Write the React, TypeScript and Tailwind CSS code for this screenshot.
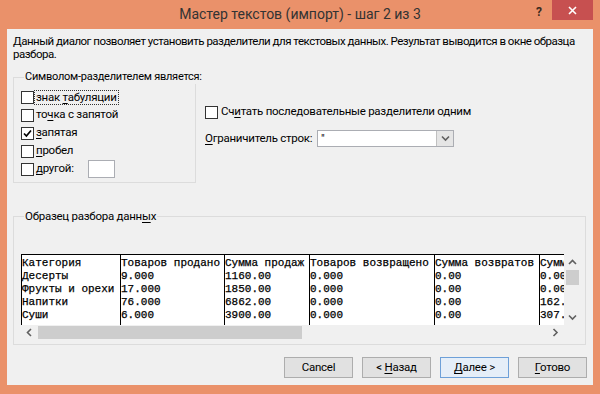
import React from 'react'

const ui = "font-['Roboto',sans-serif]"
const mono = "font-['Liberation_Mono',monospace]"

function M({ children }: { children: React.ReactNode }) {
  return <span className="underline underline-offset-2">{children}</span>
}

function Box({ checked }: { checked?: boolean }) {
  return (
    <span className="w-[13px] h-[13px] border border-[#333] bg-white shrink-0 flex items-center justify-center">
      {checked && (
        <svg width="11" height="11" viewBox="0 0 11 11">
          <path d="M2 5.5 L4.4 8 L9 2.5" fill="none" stroke="#000" strokeWidth="1.7" />
        </svg>
      )}
    </span>
  )
}

function Chevron({ dir }: { dir: 'up' | 'down' | 'left' | 'right' }) {
  const d = {
    up: 'M1 5 L4.5 1.5 L8 5',
    down: 'M1 1.5 L4.5 5 L8 1.5',
    left: 'M5 1 L1.5 4.5 L5 8',
    right: 'M1.5 1 L5 4.5 L1.5 8',
  }[dir]
  const vert = dir === 'up' || dir === 'down'
  return (
    <svg width={vert ? 9 : 7} height={vert ? 7 : 9} viewBox={vert ? '0 0 9 7' : '0 0 7 9'}>
      <path d={d} fill="none" stroke="#606060" strokeWidth="1.6" />
    </svg>
  )
}

const delimiters = [
  { pre: 'знак ', m: 'т', post: 'абуляции', focus: true },
  { pre: 'то', m: 'ч', post: 'ка с запятой' },
  { pre: '', m: 'з', post: 'апятая', checked: true },
  { pre: '', m: 'п', post: 'робел' },
  { pre: '', m: 'д', post: 'ругой:', input: true },
]

const columns = [
  { w: 'w-[99px]', cells: ['Категория', 'Десерты', 'Фрукты и орехи', 'Напитки', 'Суши'] },
  { w: 'w-[104px]', cells: ['Товаров продано', '9.000', '17.000', '76.000', '6.000'] },
  { w: 'w-[85px]', cells: ['Сумма продаж', '1160.00', '1850.00', '6862.00', '3900.00'] },
  { w: 'w-[125px]', cells: ['Товаров возвращено', '0.000', '0.000', '0.000', '0.000'] },
  { w: 'w-[105px]', cells: ['Сумма возвратов', '0.00', '0.00', '0.00', '0.00'] },
  { w: 'w-[25px]', cells: ['Сумм', '0.00', '0.00', '162.', '307.'] },
]

const buttons = [
  { label: <>Cancel</> },
  { label: <>&lt; <M>Н</M>азад</> },
  { label: <><M>Д</M>алее &gt;</>, primary: true },
  { label: <><M>Г</M>отово</> },
]

export default function App() {
  return (
    <div className={`w-[600px] h-[394px] bg-[#ea916a] flex flex-col text-black ${ui}`}>
      {/* title bar */}
      <div className="h-[29px] relative shrink-0">
        <div className="text-center text-[14px] leading-[29px] text-[#333]">
          Мастер текстов (импорт) - шаг 2 из 3
        </div>
        <div className="absolute left-[536px] top-[3px] text-[12px] font-bold text-[#3a2a20]">?</div>
        <div className="absolute left-[552px] top-0 w-[41px] h-[20px] bg-[#c75050] flex items-center justify-center">
          <svg width="9" height="9" viewBox="0 0 9 9">
            <path d="M1 1 L8 8 M8 1 L1 8" stroke="#fff" strokeWidth="1.6" />
          </svg>
        </div>
      </div>

      {/* client area */}
      <div className="mx-[7px] flex-1 bg-[#f0f0f0] px-[6px] pt-[6px] pb-[7px] flex flex-col text-[11.5px] tracking-[-0.25px]">
        <p className="leading-[13px] whitespace-nowrap tracking-[-0.5px]">
          Данный диалог позволяет установить разделители для текстовых данных. Результат выводится в окне образца
          <br />
          разбора.
        </p>

        <div className="flex mt-[9px]">
          <fieldset className="w-[183px] min-w-0 h-[113px] border border-[#dcdcdc] pl-[7px] pt-[4px]">
            <legend className="ml-[3px] px-[1px] text-[11px] leading-[14px] whitespace-nowrap">
              Символом-разделителем является:
            </legend>
            {delimiters.map((d, i) => (
              <div key={i} className="h-[18px] flex items-center gap-[1px] whitespace-nowrap">
                <Box checked={d.checked} />
                <span className={d.focus ? 'outline outline-1 outline-dotted outline-[#333] px-[1px] leading-[13px]' : 'px-[1px]'}>
                  {d.pre}
                  <M>{d.m}</M>
                  {d.post}
                </span>
                {d.input && <span className="ml-[12px] w-[27px] h-[18px] bg-white border border-[#abadb3]" />}
              </div>
            ))}
          </fieldset>

          <div className="ml-[9px] flex flex-col whitespace-nowrap">
            <div className="mt-[35px] h-[14px] flex items-center gap-[3px]">
              <Box />
              <span>
                Сч<M>и</M>тать последовательные разделители одним
              </span>
            </div>
            <div className="mt-[11px] flex items-center">
              <span className="w-[112px]">
                <M>О</M>граничитель строк:
              </span>
              <div className="w-[137px] h-[17px] bg-white border border-[#abadb3] flex">
                <span className="flex-1 pl-[3px] leading-[14px]">"</span>
                <span className="w-[17px] bg-[#e5e5e5] border-l border-[#c0c0c0] flex items-center justify-center">
                  <Chevron dir="down" />
                </span>
              </div>
            </div>
          </div>
        </div>

        <fieldset className="mt-[26px] w-[573px] h-[136px] border border-[#dcdcdc] pl-[7px] pr-[4px] pt-[31px]">
          <legend className="ml-[3px] px-[1px] leading-[14px]">
            Образец разбора данн<M>ы</M>х
          </legend>
          <div className="w-[560px] h-[86px] flex flex-col tracking-normal">
            <div className="flex h-[71px]">
              <div className="w-[543px] flex bg-white border-t border-black overflow-hidden">
                {columns.map((c, i) => (
                  <div
                    key={i}
                    className={`${c.w} shrink-0 border-l border-black pt-[2px] ${mono} text-[11px] leading-[13px] [-webkit-text-stroke:0.25px_#000]`}
                  >
                    {c.cells.map((t, j) => (
                      <div key={j} className="whitespace-pre">{t}</div>
                    ))}
                  </div>
                ))}
              </div>
              <div className="w-[17px] flex flex-col items-center">
                <div className="h-[16px] flex items-center justify-center">
                  <Chevron dir="up" />
                </div>
                <div className="w-[13px] h-[15px] bg-[#cdcdcd]" />
                <div className="flex-1" />
                <div className="h-[16px] flex items-center justify-center">
                  <Chevron dir="down" />
                </div>
              </div>
            </div>
            <div className="h-[15px] flex items-center">
              <div className="w-[17px] flex justify-center">
                <Chevron dir="left" />
              </div>
              <div className="w-[264px] h-[13px] bg-[#cdcdcd]" />
              <div className="flex-1" />
              <div className="w-[17px] flex justify-center">
                <Chevron dir="right" />
              </div>
              <div className="w-[17px]" />
            </div>
          </div>
        </fieldset>

        <div className="mt-[12px] flex justify-end gap-[9px]">
          {buttons.map((b, i) => (
            <button
              key={i}
              className={`w-[69px] h-[21px] border ${
                b.primary ? 'border-[#6ea0d8] bg-[#e5eef8]' : 'border-[#adadad] bg-[#e1e1e1]'
              }`}
            >
              {b.label}
            </button>
          ))}
        </div>
      </div>
      <div className="h-[9px] shrink-0" />
    </div>
  )
}
